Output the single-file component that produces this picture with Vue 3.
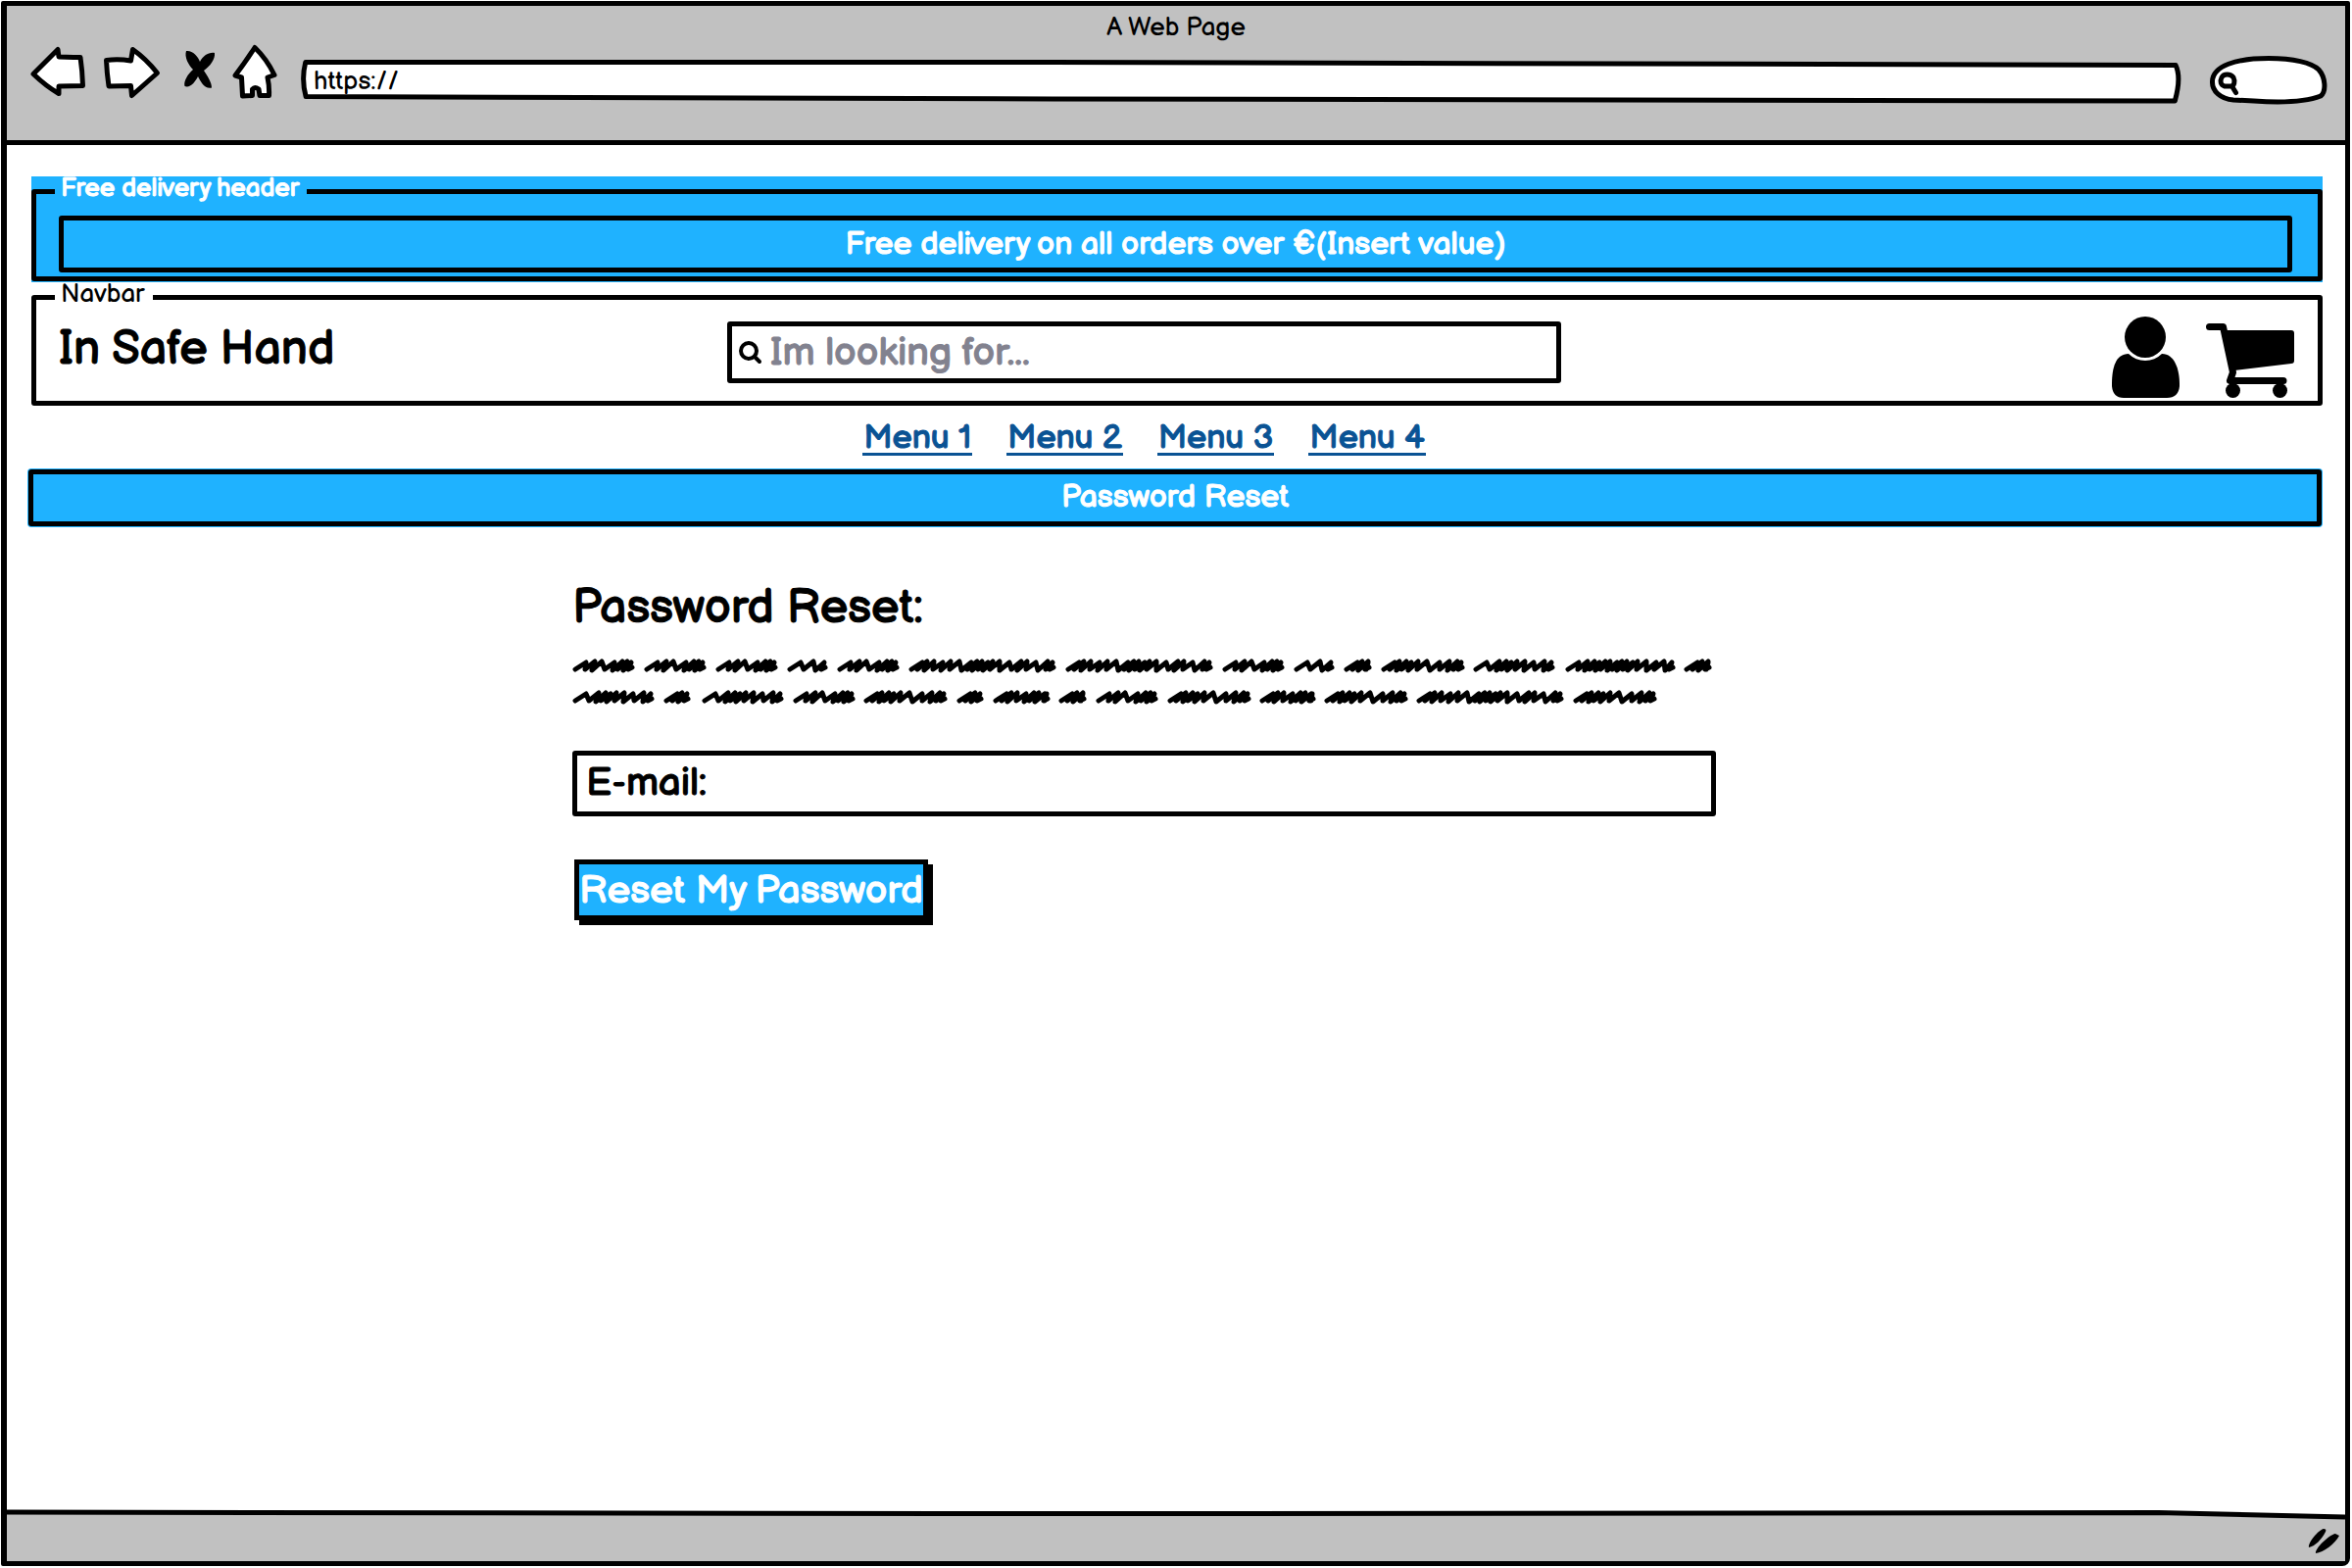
<script setup>
import { ref } from 'vue'

const address = ref('https://')
const webSearch = ref('')
const query = ref('')
const email = ref('')

const menu = ['Menu 1', 'Menu 2', 'Menu 3', 'Menu 4']

// Scribbled placeholder copy: [start, width] of every word, per line
const lines = [
  [[0, 64], [73, 64], [146, 64], [219, 42], [270, 64], [343, 151], [503, 151], [663, 64], [736, 42], [787, 29], [825, 86], [919, 84], [1013, 113], [1134, 29]],
  [[0, 84], [93, 28], [132, 84], [225, 64], [297, 86], [392, 28], [429, 59], [496, 29], [534, 64], [607, 86], [701, 58], [767, 86], [861, 151], [1021, 86]]
]
// Distance between the strokes, chosen by the width of the word
const rhythms = {
  28: [5, 6, 8],
  29: [5, 6, 8],
  42: [13, 12, 7],
  58: [5, 6, 9, 8, 5, 6, 10],
  59: [5, 6, 9, 8, 5, 6, 10],
  64: [9, 7, 13, 8, 5, 6, 5],
  84: [13, 7, 5, 6, 8, 9, 11, 9, 11],
  86: [5, 7, 5, 7, 9, 13, 10, 8, 6, 5],
  113: [9, 7, 5, 6, 5, 7, 5, 5, 6, 5, 9, 10, 8, 11],
  151: [5, 7, 9, 8, 9, 12, 6, 5, 6, 5, 7, 10, 12, 6, 9, 12, 8]
}

function scribble(start, width, line) {
  const top = line * 32 + 6
  const steps = rhythms[width]
  let x = start + 3
  let d = `M${x} ${top + 8}`
  let i = 0
  while (x + 12 < start + width - 2) {
    d += `L${x + 11} ${top + (i % 3 === 0 ? 1 : 0)}`
    x += steps[i % steps.length]
    d += `L${x + 1} ${top + 8 + (i % 2)}`
    i += 1
  }
  return d + `L${start + width - 4} ${top + 1}L${start + width - 7} ${top + 8}L${start + width - 3} ${top + 6}`
}

const words = lines.flatMap((line, row) => line.map(([start, width]) => scribble(start, width, row)))
</script>

<template>
  <div class="window">
    <header class="chrome">
      <div class="title">A Web Page</div>
      <div class="toolbar">
        <button type="button" aria-label="Back">
          <svg width="58" height="64" viewBox="31 43 58 64">
            <path class="outline" d="M34 75.500L59 50.500L60 58L75 58.500L82 58.500Q84 72 84.500 87.500L60 88L60 95.500Q47 88 34 75.500Z" />
          </svg>
        </button>
        <button type="button" aria-label="Forward">
          <svg width="60" height="64" viewBox="104 43 60 64">
            <path class="outline" d="M108.500 61.500Q121 60 133.500 62L135.500 50.500Q149 60 160.500 74.500L134.500 97.500L133.500 87.500L111 88Q109 74 108.500 61.500Z" />
          </svg>
        </button>
        <button type="button" aria-label="Stop">
          <svg width="42" height="64" viewBox="179 43 42 64">
            <path d="M190 52C196 51 202 57 204 63C207 57 213 53 219 54C220 60 214 68 208 72C212 78 216 84 216 89.500C209 91 205 84 202 78C199 84 194 90 188.500 88C187 83 192 75 197 71C192 66 188 58 190 52Z" />
          </svg>
        </button>
        <button type="button" aria-label="Home">
          <svg width="48" height="64" viewBox="236 43 48 64">
            <path class="outline" d="M260 48.500Q272 60 280 76.500L273 79Q275 88 274.500 97.500L265 97.500L264 91Q260 88 257.500 91L257.500 97.500L247.500 98Q247 88 246.500 79L240 77Q250 64 260 48.500Z" />
          </svg>
        </button>
        <div class="address">
          <svg class="backdrop" viewBox="0 0 1000 48" preserveAspectRatio="none">
            <path class="outline" vector-effect="non-scaling-stroke" d="M3.500 4.500L400 4.500L996.400 7.500Q999.500 20 996 44L400 42L3.700 39.500Q1.200 22 3.500 4.500Z" />
          </svg>
          <input v-model="address" type="text" aria-label="Address" />
        </div>
        <div class="web-search">
          <svg class="backdrop" viewBox="2254 57 122 50">
            <path class="outline" d="M2257.500 83C2258 67 2282 59.500 2315 59.500C2340 59.500 2359 64 2366 71C2373 79 2374 93 2368 98C2350 105 2322 104.500 2300 103L2279 102C2266 101 2257 93 2257.500 83Z" />
            <path class="outline" d="M2267 79C2269 75 2276 75 2279 79C2281 83 2280 88 2276 88H2270C2266 87 2265 83 2267 79ZM2277.500 88L2281.500 94.500" />
          </svg>
          <input v-model="webSearch" type="search" aria-label="Web search" />
        </div>
      </div>
    </header>

    <main class="page">
      <div class="banner">
        <fieldset class="group">
          <legend>Free delivery header</legend>
          <p class="notice">Free delivery on all orders over €(Insert value)</p>
        </fieldset>
      </div>

      <fieldset class="group navbar">
        <legend>Navbar</legend>
        <div class="nav-row">
          <div class="brand">In Safe Hand</div>
          <label class="search">
            <svg width="24" height="24" viewBox="0 0 24 24" aria-hidden="true">
              <circle cx="10" cy="10" r="8" />
              <path d="M16 16L21 21" />
            </svg>
            <input v-model="query" type="text" placeholder="Im looking for..." aria-label="Search products" />
          </label>
          <div class="actions">
            <button type="button" aria-label="Account">
              <svg width="71" height="86" viewBox="2154 321 71 86">
                <path d="M2155 392C2155 375 2159 361 2172 361H2206C2219 361 2224 377 2224 392V394Q2223 406 2211 406H2167Q2156 406 2155 394Z" />
                <circle cx="2189" cy="344" r="24" fill="#fff" />
                <circle cx="2189" cy="344" r="21" />
              </svg>
            </button>
            <button type="button" aria-label="Cart">
              <svg width="92" height="86" viewBox="2250 321 92 86">
                <path class="cart-line" d="M2254.500 333.500H2268.500L2278.500 380L2275.500 388.500H2330" />
                <path d="M2270 337H2338Q2341 337 2341 340V368Q2341 371 2338 371L2280 378Z" />
                <circle cx="2278.500" cy="398.500" r="7.500" />
                <circle cx="2326.500" cy="398.500" r="7.500" />
              </svg>
            </button>
          </div>
        </div>
      </fieldset>

      <nav class="menu">
        <a v-for="item in menu" :key="item" href="#">{{ item }}</a>
      </nav>

      <h1 class="page-title">Password Reset</h1>

      <div class="columns">
        <form class="reset" @submit.prevent>
          <h2>Password Reset:</h2>
          <svg class="copy" viewBox="0 0 1167 52" aria-hidden="true">
            <path v-for="(word, i) in words" :key="i" :d="word" />
          </svg>
          <div class="field">
            <label for="email">E-mail:</label>
            <input id="email" v-model="email" type="email" />
          </div>
          <button class="submit" type="submit">Reset My Password</button>
        </form>
      </div>
    </main>

    <footer class="status">
      <svg class="edge" viewBox="0 0 1000 12" preserveAspectRatio="none" aria-hidden="true">
        <path class="edge-fill" d="M0 3Q250 5 500 4.500L920 3.500L1000 8V12H0Z" />
        <path class="edge-line" vector-effect="non-scaling-stroke" d="M0 3Q250 5 500 4.500L920 3.500L1000 8" />
      </svg>
      <svg class="grip" width="34" height="28" viewBox="2356 1561 34 28" aria-hidden="true">
        <path d="M2357 1581C2356 1576 2367 1563 2372 1562C2374 1562 2375 1563 2374 1565C2370 1573 2363 1580 2357 1581ZM2364 1587C2363 1582 2378 1568 2384 1567L2388 1569C2384 1577 2372 1586 2364 1587Z" />
      </svg>
    </footer>
  </div>
</template>

<style>
body {
  margin: 0;
  background: #fff;
}
</style>

<style scoped>
.window,
.window * {
  box-sizing: border-box;
}

.window {
  display: flex;
  flex-direction: column;
  min-height: calc(100vh - 3px);
  margin: 1px 2px 1px 1px;
  border: 5px solid #000;
  border-left-width: 6px;
  border-radius: 2px 2px 8px 2px;
  font-family: "Balsamiq Sans", "Liberation Sans", Arial, sans-serif;
  color: #000;
}

button,
input {
  font: inherit;
  color: inherit;
  padding: 0;
  border: 0;
  background: none;
}

input {
  min-width: 0;
  outline: 0;
}

svg {
  display: block;
}

/* Heavier pen for the larger lettering */
.banner,
.brand,
.search input,
.menu a,
.page-title,
.reset h2,
.field,
.submit {
  -webkit-text-stroke: 1px currentColor;
}

.outline {
  fill: #fff;
  stroke: #000;
  stroke-width: 5px;
  stroke-linejoin: round;
  stroke-linecap: round;
}

.chrome {
  height: 142px;
  padding-top: 9px;
  border-bottom: 5px solid #000;
  background: #c1c1c1;
}

.title {
  font-size: 26px;
  line-height: 28px;
  text-align: center;
}

.toolbar {
  display: flex;
  align-items: flex-start;
  gap: 15px;
  padding: 0 17px 0 24px;
}

.address,
.web-search {
  position: relative;
}

.address {
  flex: 1;
  height: 48px;
  margin: 16px 12px 0 6px;
}

.backdrop {
  position: absolute;
  inset: 0;
  width: 100%;
  height: 100%;
}

.address input,
.web-search input {
  position: relative;
  width: 100%;
  height: 100%;
}

.address input {
  padding-left: 15px;
  font-size: 26px;
}

.web-search {
  width: 122px;
  height: 50px;
  margin-top: 14px;
}

.web-search input {
  padding: 0 12px 0 34px;
  font-size: 26px;
}

.page {
  flex: 1;
  padding: 32px 23px 0 25px;
}

.banner {
  padding-bottom: 1px;
  background: #1fb2ff;
  color: #fff;
}

.group {
  min-width: 0;
  margin: 0;
  padding: 9px 26px 4px 23px;
  border: 5px solid #000;
  border-radius: 3px;
}

.group legend {
  margin-left: -4px;
  padding: 0 8px 6px 6px;
  font-size: 26px;
  line-height: 25px;
}

.notice {
  margin: 0;
  padding-top: 2px;
  border: 5px solid #000;
  border-radius: 3px;
  font-size: 32px;
  line-height: 46px;
  text-align: center;
}

.navbar {
  padding-top: 2px;
  padding-bottom: 2px;
}

.nav-row {
  display: grid;
  grid-template-columns: 682fr 851fr 746fr;
  align-items: start;
}

.brand {
  font-size: 48px;
  line-height: 72px;
}

.search {
  display: flex;
  align-items: center;
  gap: 8px;
  height: 63px;
  margin-top: 7px;
  padding: 0 7px;
  border: 5px solid #000;
  border-radius: 3px;
  font-size: 40px;
}

.search svg {
  fill: none;
  stroke: #000;
  stroke-width: 4px;
  stroke-linecap: round;
}

.search input {
  flex: 1;
  height: 50px;
}

.search input::placeholder {
  color: #82828f;
  -webkit-text-stroke-color: #82828f;
  opacity: 1;
}

.actions {
  display: flex;
  justify-content: flex-end;
  gap: 25px;
  margin-right: -3px;
}

.cart-line {
  fill: none;
  stroke: #000;
  stroke-width: 7px;
  stroke-linecap: round;
  stroke-linejoin: round;
}

.menu {
  display: flex;
  justify-content: center;
  gap: 35px;
  height: 65px;
  padding: 14px 67px 0 0;
}

.menu a {
  height: 37px;
  padding: 2px 1px 0;
  border-bottom: 3px solid #0a5394;
  color: #0a5394;
  font-size: 34px;
  line-height: 34px;
  text-decoration: none;
}

.page-title {
  margin: 0 1px 0 -3px;
  border: 5px solid #000;
  border-radius: 3px;
  box-shadow: 0 0 0 1px #1fb2ff;
  background: #1fb2ff;
  color: #fff;
  font-size: 32px;
  font-weight: 400;
  line-height: 48px;
  text-align: center;
}

.columns {
  display: grid;
  grid-template-columns: 552fr 1167fr 619fr;
}

.reset {
  grid-column: 2;
  padding: 56px 0 44px;
}

.reset h2 {
  margin: 0;
  font-size: 48px;
  font-weight: 400;
  line-height: 56px;
}

.copy {
  width: 100%;
  margin-top: 20px;
  fill: none;
  stroke: #000;
  stroke-width: 5px;
  stroke-linecap: round;
  stroke-linejoin: round;
}

.field {
  display: flex;
  align-items: center;
  gap: 8px;
  height: 67px;
  margin: 45px 0 44px;
  padding: 0 9px 2px;
  border: 5px solid #000;
  border-radius: 3px;
  font-size: 40px;
}

.field input {
  flex: 1;
  height: 48px;
}

.submit {
  display: block;
  margin-left: 2px;
  padding: 2px 0 0;
  border: 5px solid #000;
  box-shadow: 5px 5px 0 #000;
  background: #1fb2ff;
  color: #fff;
  font-size: 40px;
  line-height: 50px;
}

.status {
  position: relative;
  display: flex;
  justify-content: flex-end;
  align-items: center;
  height: 53px;
  padding: 12px 4px 0 0;
  background: linear-gradient(#fff 10px, #c1c1c1 10px);
}

.edge {
  position: absolute;
  top: 0;
  left: 0;
  width: 100%;
  height: 12px;
}

.edge-fill {
  fill: #c1c1c1;
}

.edge-line {
  fill: none;
  stroke: #000;
  stroke-width: 5px;
}
</style>
